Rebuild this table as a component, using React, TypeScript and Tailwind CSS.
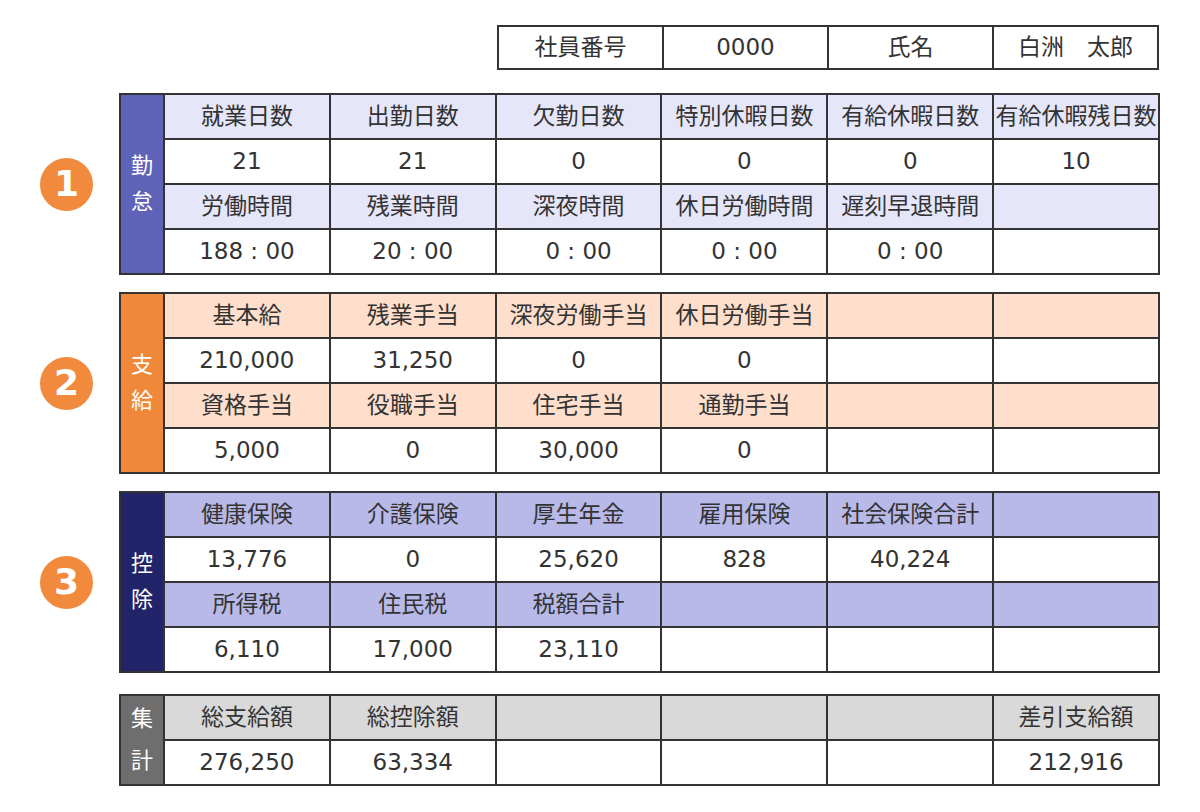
const FONT = "font-['DejaVu_Sans','Noto_Sans_CJK_JP',sans-serif]";

type Section = {
  num?: string;
  label: string[];
  labelBg: string;
  headBg: string;
  leading: string;
  rows: { head: string[]; vals: string[] }[];
};

const sections: Section[] = [
  {
    num: "1",
    label: ["勤", "怠"],
    labelBg: "bg-[#5f63b8]",
    headBg: "bg-[#e6e6fa]",
    leading: "leading-[36px]",
    rows: [
      {
        head: ["就業日数", "出勤日数", "欠勤日数", "特別休暇日数", "有給休暇日数", "有給休暇残日数"],
        vals: ["21", "21", "0", "0", "0", "10"],
      },
      {
        head: ["労働時間", "残業時間", "深夜時間", "休日労働時間", "遅刻早退時間", ""],
        vals: ["188 : 00", "20 : 00", "0 : 00", "0 : 00", "0 : 00", ""],
      },
    ],
  },
  {
    num: "2",
    label: ["支", "給"],
    labelBg: "bg-[#f0883a]",
    headBg: "bg-[#ffdfcc]",
    leading: "leading-[36px]",
    rows: [
      {
        head: ["基本給", "残業手当", "深夜労働手当", "休日労働手当", "", ""],
        vals: ["210,000", "31,250", "0", "0", "", ""],
      },
      {
        head: ["資格手当", "役職手当", "住宅手当", "通勤手当", "", ""],
        vals: ["5,000", "0", "30,000", "0", "", ""],
      },
    ],
  },
  {
    num: "3",
    label: ["控", "除"],
    labelBg: "bg-[#212468]",
    headBg: "bg-[#b8b9e8]",
    leading: "leading-[36px]",
    rows: [
      {
        head: ["健康保険", "介護保険", "厚生年金", "雇用保険", "社会保険合計", ""],
        vals: ["13,776", "0", "25,620", "828", "40,224", ""],
      },
      {
        head: ["所得税", "住民税", "税額合計", "", "", ""],
        vals: ["6,110", "17,000", "23,110", "", "", ""],
      },
    ],
  },
  {
    label: ["集", "計"],
    labelBg: "bg-[#6e6e6e]",
    headBg: "bg-[#d9d9d9]",
    leading: "leading-[42px]",
    rows: [
      {
        head: ["総支給額", "総控除額", "", "", "", "差引支給額"],
        vals: ["276,250", "63,334", "", "", "", "212,916"],
      },
    ],
  },
];

function Cell({ text, bg }: { text: string; bg: string }) {
  return (
    <div className={`${bg} flex h-[43px] items-center justify-center whitespace-nowrap text-[23px] leading-none text-[#333]`}>
      {text}
    </div>
  );
}

function SectionTable({ s }: { s: Section }) {
  const rowCount = s.rows.length * 2;
  return (
    <div className="flex items-center">
      <div className="flex w-[119px] items-center pl-[40px]">
        {s.num && (
          <div className="flex h-[53px] w-[53px] items-center justify-center rounded-full bg-[#f18a3c] text-[36px] font-bold leading-none text-white">
            {s.num}
          </div>
        )}
      </div>
      <div className="grid w-[1041px] grid-cols-[42px_repeat(6,1fr)] gap-[2px] border-2 border-[#333] bg-[#333]">
        <div
          className={`${s.labelBg} flex flex-col items-center justify-center text-[22px] text-white ${s.leading} ${rowCount === 4 ? "row-span-4" : "row-span-2"}`}
        >
          {s.label.map((c) => (
            <span key={c}>{c}</span>
          ))}
        </div>
        {s.rows.map((r, i) => (
          <div key={i} className="contents">
            {r.head.map((h, j) => (
              <Cell key={`h${j}`} text={h} bg={s.headBg} />
            ))}
            {r.vals.map((v, j) => (
              <Cell key={`v${j}`} text={v} bg="bg-white" />
            ))}
          </div>
        ))}
      </div>
    </div>
  );
}

export default function App() {
  return (
    <div className={`h-[812px] w-[1200px] bg-white pt-[25px] ${FONT}`}>
      <div className="ml-[497px] grid w-[662px] grid-cols-4 gap-[2px] border-2 border-[#333] bg-[#333]">
        {["社員番号", "0000", "氏名", "白洲　太郎"].map((t) => (
          <div key={t} className="flex h-[41px] items-center justify-center bg-white text-[23px] leading-none text-[#333]">
            {t}
          </div>
        ))}
      </div>
      <div className="mt-[23px] flex flex-col gap-[17px]">
        {sections.slice(0, 3).map((s) => (
          <SectionTable key={s.label[0]} s={s} />
        ))}
        <div className="mt-[4px]">
          <SectionTable s={sections[3]} />
        </div>
      </div>
    </div>
  );
}
